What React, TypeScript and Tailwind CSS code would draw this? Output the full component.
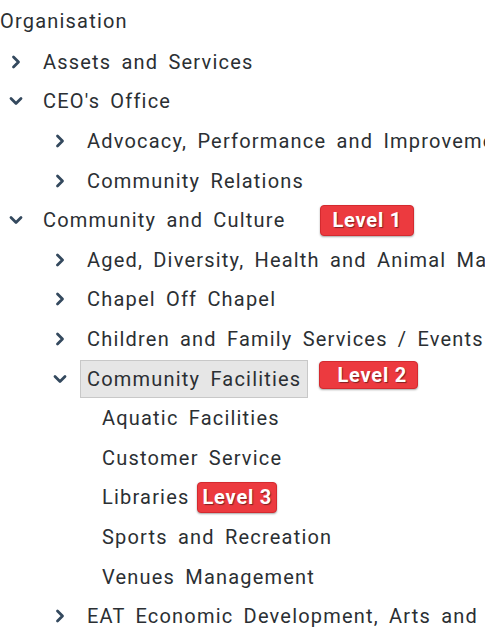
type Node = {
  label: string;
  open?: boolean;
  leaf?: boolean;
  selected?: boolean;
  badge?: string;
  badgeClass?: string;
  children?: Node[];
};

const tree: Node[] = [
  { label: "Assets and Services" },
  {
    label: "CEO's Office",
    open: true,
    children: [
      { label: "Advocacy, Performance and Improvement" },
      { label: "Community Relations" },
    ],
  },
  {
    label: "Community and Culture",
    open: true,
    badge: "Level 1",
    badgeClass: "ml-[35px] h-[31px] pl-[11px] pr-[11px]",
    children: [
      { label: "Aged, Diversity, Health and Animal Management" },
      { label: "Chapel Off Chapel" },
      { label: "Children and Family Services / Events" },
      {
        label: "Community Facilities",
        open: true,
        selected: true,
        badge: "Level 2",
        badgeClass: "ml-[11px] h-[28px] self-start mt-[2px] pl-[17px] pr-[10px]",
        children: [
          { label: "Aquatic Facilities", leaf: true },
          { label: "Customer Service", leaf: true },
          {
            label: "Libraries",
            leaf: true,
            badge: "Level 3",
            badgeClass: "ml-[7px] h-[31px] pl-[5px] pr-[4px]",
          },
          { label: "Sports and Recreation", leaf: true },
          { label: "Venues Management", leaf: true },
        ],
      },
      { label: "EAT Economic Development, Arts and Tourism" },
    ],
  },
];

function Chevron({ open }: { open?: boolean }) {
  return (
    <svg width="14" height="14" viewBox="0 0 14 14" className="shrink-0">
      <path
        d={open ? "M2 4.5 L7 9.5 L12 4.5" : "M4.5 2 L9.5 7 L4.5 12"}
        fill="none"
        stroke="#34495e"
        strokeWidth="2.8"
        strokeLinecap="round"
        strokeLinejoin="round"
      />
    </svg>
  );
}

function Row({ node, depth }: { node: Node; depth: number }) {
  const indent = depth === 0 ? "pl-[9px]" : "pl-[53px]";
  return (
    <>
      <div className={`flex h-[39.6px] items-center whitespace-nowrap ${node.leaf ? "pl-[102px]" : indent}`}>
        {!node.leaf && <Chevron open={node.open} />}
        <span
          className={
            node.leaf
              ? ""
              : node.selected
              ? "ml-[13px] border border-[#c8c8c8] bg-[#e6e6e6] px-[6px] py-[3px]"
              : "ml-[20px]"
          }
        >
          {node.label}
        </span>
        {node.badge && (
          <span
            className={`${node.badgeClass} inline-flex shrink-0 items-center rounded-[4px] border border-[#d42a2f] bg-[#ec3a3f] text-[20px] font-bold tracking-[0.8px] [word-spacing:0px] text-white shadow-[0_1px_2px_rgba(0,0,0,0.35)] [text-shadow:1px_1px_1px_rgba(0,0,0,0.45)]`}
          >
            {node.badge}
          </span>
        )}
      </div>
      {node.open &&
        node.children?.map((c) => <Row key={c.label} node={c} depth={depth + 1} />)}
    </>
  );
}

export default function App() {
  return (
    <div className="h-[638px] w-[485px] overflow-hidden bg-white font-['Roboto',sans-serif] text-[20px] tracking-[1.2px] [word-spacing:4px] text-[#2b2f33]">
      <div className="flex h-[42px] items-center">Organisation</div>
      {tree.map((n) => (
        <Row key={n.label} node={n} depth={0} />
      ))}
    </div>
  );
}
